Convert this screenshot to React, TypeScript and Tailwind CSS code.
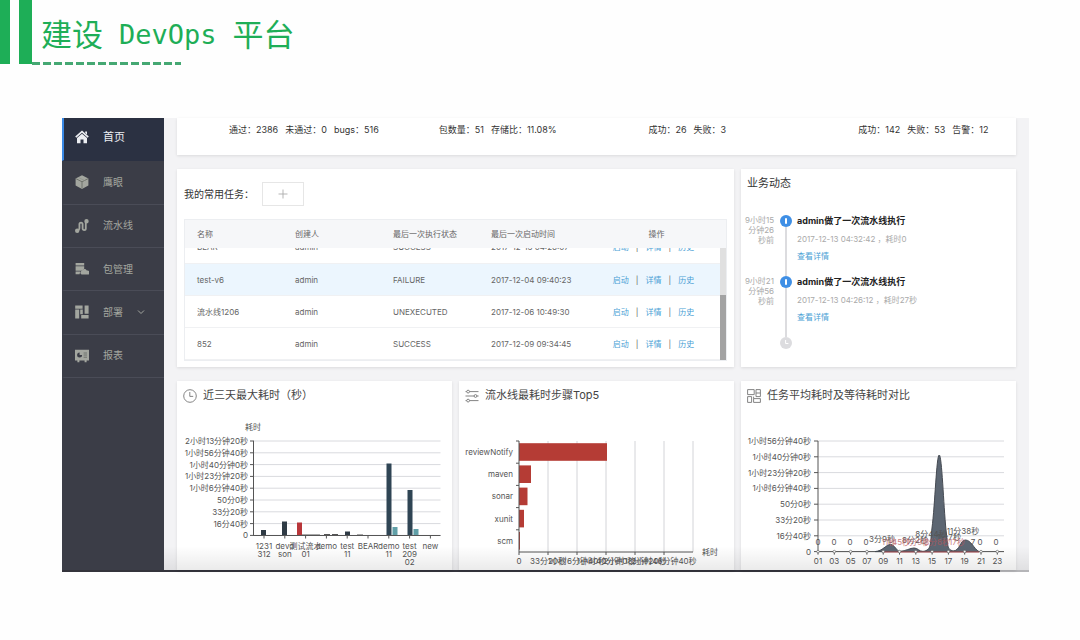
import { type ReactNode } from "react";
import { Plus } from "lucide-react";

const navItems = [
  { label: "首页", icon: <HomeIcon />, active: true },
  { label: "鹰眼", icon: <CubeIcon /> },
  { label: "流水线", icon: <PipelineIcon /> },
  { label: "包管理", icon: <PackageIcon /> },
  { label: "部署", icon: <DeployIcon />, expandable: true },
  { label: "报表", icon: <ReportIcon /> },
];

const stats = [
  ["通过：2386", "未通过：0", "bugs：516"],
  ["包数量：51", "存储比：11.08%"],
  ["成功：26", "失败：3"],
  ["成功：142", "失败：53", "告警：12"],
];

const tasks = [
  { name: "BEAR", owner: "admin", status: "SUCCESS", time: "2017-12-13 04:26:07" },
  { name: "test-v6", owner: "admin", status: "FAILURE", time: "2017-12-04 09:40:23", hover: true },
  { name: "流水线1206", owner: "admin", status: "UNEXECUTED", time: "2017-12-06 10:49:30" },
  { name: "852", owner: "admin", status: "SUCCESS", time: "2017-12-09 09:34:45" },
];

const events = [
  { ago: "9小时15分钟26秒前", detail: "2017-12-13 04:32:42 ，耗时0" },
  { ago: "9小时21分钟56秒前", detail: "2017-12-13 04:26:12 ，耗时27秒" },
];

function HomeIcon() {
  return (
    <svg viewBox="0 0 14 14" className="size-3.5" fill="currentColor">
      <path d="M7 .6 13.8 6.6l-1.1 1.2L7 2.8 1.3 7.8.2 6.6z" />
      <path d="M10.2 1.4H12v3.2l-1.8-1.5z" />
      <path d="M7 3.7 12 8v5.2H8.5V9.6h-3v3.6H2V8z" />
    </svg>
  );
}

function CubeIcon() {
  return (
    <svg viewBox="0 0 14 14" className="size-3.5">
      <path d="M7 .2 13.4 3.4v7.2L7 13.9.6 10.6V3.4z" fill="#a3a69f" />
      <path d="M1 3.7 7 6.8l6-3.1M7 6.8v6.6" fill="none" stroke="#6a6d66" strokeWidth=".9" />
      <path d="m3.6 2.6 6.6 3.2" stroke="#8a8d86" strokeWidth=".6" />
    </svg>
  );
}

function PipelineIcon() {
  return (
    <svg viewBox="0 0 14 14" className="size-3.5" fill="none" stroke="currentColor" strokeWidth="1.8">
      <path d="M2.4 11.4c2.6 0 2-3 2-6.200a1.600 1.600 0 0 1 3.200 0v4.400a1.600 1.600 0 0 0 3.200 0V2.6" />
      <circle cx="2.2" cy="11.7" r="1.3" fill="currentColor" />
      <circle cx="11.5" cy="2.3" r="1.3" fill="currentColor" />
    </svg>
  );
}

function PackageIcon() {
  return (
    <svg viewBox="0 0 14 14" className="size-3.5" fill="currentColor">
      <path d="M.6 1h8.6v2.600H.6zM.6 4.300h8.600v2.500L7 8.700H.6zM.6 9.500h4.600l-.6 2.800h-4z" />
      <path d="M6.600 12.600a2.100 2.100 0 0 1 .2-3.900 2.800 2.800 0 0 1 5-.1 2.100 2.100 0 0 1 1.300 4z" />
    </svg>
  );
}

function DeployIcon() {
  return (
    <svg viewBox="0 0 14 14" className="size-3.5" fill="currentColor">
      <path d="M.2.4h7.400v3.400H.2zM.2 4.600h4v9h-4zM9.600.4h4v8.400h-4zM5.200 4.600h2.600v4.600H5.200zM6.200 10h7.400v3.600H6.200z" />
    </svg>
  );
}

function ReportIcon() {
  return (
    <svg viewBox="0 0 14 14" className="size-3.5">
      <path d="M0 .8h14v10.600H0zM2.400 11.400h2V13.200h-2zM9.600 11.400h2V13.200h-2z" fill="#a3a69f" />
      <path d="M4.600 3.400a2.500 2.500 0 1 0 2.500 2.500H4.600z" fill="#3b3d47" />
      <path d="M8.600 4H12M8.600 6H12M8.600 8.200H12" stroke="#6a6d69" strokeWidth=".9" />
    </svg>
  );
}

function ClockIcon() {
  return (
    <svg viewBox="0 0 14 14" className="size-3.5" fill="none" stroke="currentColor" strokeWidth=".9">
      <circle cx="7" cy="7" r="6.3" />
      <path d="M6.8 3v4.400h3.400" />
    </svg>
  );
}

function StepsIcon() {
  return (
    <svg viewBox="0 0 14 14" className="size-3.5" fill="none" stroke="currentColor" strokeWidth=".9">
      <path d="M.5 2.600h1.200M4.500 2.600h9M.5 7h8.600M11.900 7h1.700M.5 11.600h1.200M4.500 11.600h9" />
      <circle cx="3.1" cy="2.6" r="1.4" />
      <circle cx="10.5" cy="7" r="1.4" />
      <circle cx="3.1" cy="11.6" r="1.4" />
    </svg>
  );
}

function CompareIcon() {
  return (
    <svg viewBox="0 0 14 14" className="size-3.5" fill="none" stroke="currentColor" strokeWidth=".9">
      <path d="M.6.6h6.600v5H.6zM9 .6h4.400v7H9zM.6 7.600h4v5.800h-4zM6.600 9.600h6.800v3.800H6.600zM6.600 7.600v2M9 4h4.400" />
    </svg>
  );
}

function Card({ className = "", children }: { className?: string; children: ReactNode }) {
  return <section className={`bg-white shadow-[0_1px_3px_#0000001a] ${className}`}>{children}</section>;
}

function ChartCard({ icon, title, children }: { icon: ReactNode; title: string; children: ReactNode }) {
  return (
    <Card>
      <h2 className="flex h-[29px] items-center gap-1.5 pl-1.5 text-[11px] text-[#444]">
        <span className="text-[#777]">{icon}</span>
        {title}
      </h2>
      {children}
    </Card>
  );
}

function Sidebar() {
  return (
    <nav className="w-[102px] shrink-0 bg-[#3b3d47]">
      <div className="grid h-[260px] grid-rows-6">
        {navItems.map((item) => (
          <a
            key={item.label}
            href="#"
            className={`flex items-center border-b border-l-2 pl-[11px] ${
              item.active
                ? "border-b-[#2b3142] border-l-[#3b8ae6] bg-[#2b3142] pb-1 text-[11px] text-[#eceef2]"
                : "border-b-[#4a4c57] border-l-transparent text-[10px] text-[#a3a69f]"
            }`}
          >
            {item.icon}
            <span className="ml-3.5">{item.label}</span>
            {item.expandable && (
              <svg viewBox="0 0 8 8" className="ml-3.5 size-2" fill="none" stroke="currentColor" strokeWidth="1">
                <path d="m1 2.5 3 3 3-3" />
              </svg>
            )}
          </a>
        ))}
      </div>
    </nav>
  );
}

function Columns() {
  return (
    <colgroup>
      <col className="w-[98px]" />
      <col className="w-[98px]" />
      <col className="w-[98px]" />
      <col className="w-[108px]" />
      <col />
    </colgroup>
  );
}

function TaskCard() {
  return (
    <Card className="col-span-2 px-[7px] pt-[13px]">
      <div className="flex items-center gap-2 text-[10px] text-[#333]">
        <h2>我的常用任务：</h2>
        <button
          type="button"
          aria-label="添加任务"
          className="flex h-6 w-[42px] items-center justify-center border border-[#e6e6e6] text-[#aaa]"
        >
          <Plus size={14} strokeWidth={1.5} />
        </button>
      </div>

      <div className="mt-[13px] border border-[#eceef1] text-[8px] text-[#666]">
        <table className="w-full table-fixed text-left">
          <Columns />
          <thead className="bg-[#f6f7f9]">
            <tr className="h-7">
              <th className="pl-3 font-normal">名称</th>
              <th className="pl-3 font-normal">创建人</th>
              <th className="pl-3 font-normal">最后一次执行状态</th>
              <th className="pl-3 font-normal">最后一次启动时间</th>
              <th className="text-center font-normal">操作</th>
            </tr>
          </thead>
        </table>
        {/* scrolled to the end, so the first row is half hidden */}
        <div className="flex h-28">
          <div className="flex min-w-0 flex-1 flex-col justify-end overflow-hidden">
            <table className="w-full table-fixed">
              <Columns />
              <tbody>
                {tasks.map((task) => (
                  <tr
                    key={task.name}
                    className={`h-8 border-b border-[#f0f1f3] ${task.hover ? "bg-[#ecf6fe]" : ""}`}
                  >
                    <td className="pl-3">{task.name}</td>
                    <td className="pl-3">{task.owner}</td>
                    <td className="pl-3">{task.status}</td>
                    <td className="pl-3">{task.time}</td>
                    <td>
                      <div className="flex items-center justify-center gap-[7px]">
                        <a href="#" className="text-[#4b9fd5]">启动</a>
                        <span>|</span>
                        <a href="#" className="text-[#4b9fd5]">详情</a>
                        <span>|</span>
                        <a href="#" className="text-[#4b9fd5]">历史</a>
                      </div>
                    </td>
                  </tr>
                ))}
              </tbody>
            </table>
          </div>
          <div className="flex w-1.5 flex-col justify-end bg-[#e0e0e0]">
            <div className="h-[65px] bg-[#a3a3a3]" />
          </div>
        </div>
      </div>
    </Card>
  );
}

function ActivityCard() {
  return (
    <Card className="h-[198px]">
      <h2 className="flex h-7 items-center pl-1.5 text-[11px] text-[#333]">业务动态</h2>
      <ol className="pt-[18px]">
        {events.map((event) => (
          <li key={event.ago} className="flex h-[61px]">
            <p className="w-[33px] text-right text-[8px] leading-[10px] text-[#aaa]">{event.ago}</p>
            <div className="ml-1.5 flex w-3 flex-col items-center">
              <span className="flex size-3 shrink-0 items-center justify-center rounded-full bg-[#3f8fe5]">
                <span className="h-1.5 w-0.5 rounded-full bg-white" />
              </span>
              <span className="w-0.5 flex-1 bg-[#dcdcdf]" />
            </div>
            <div className="ml-[5px]">
              <h3 className="text-[9px] leading-3 font-bold text-[#222]">admin做了一次流水线执行</h3>
              <p className="mt-1.5 text-[8px] leading-3 text-[#aaa]">{event.detail}</p>
              <a href="#" className="mt-[5px] block text-[8px] leading-3 text-[#4b9fd5]">
                查看详情
              </a>
            </div>
          </li>
        ))}
        <li className="ml-[39px]">
          <svg viewBox="0 0 12 12" className="size-3">
            <circle cx="6" cy="6" r="6" fill="#dcdcdf" />
            <path d="M5.600 3v3.500h2.800" fill="none" stroke="#fff" strokeWidth="1" />
          </svg>
        </li>
      </ol>
    </Card>
  );
}

const durationTicks = [
  "2小时13分钟20秒",
  "1小时56分钟40秒",
  "1小时40分钟0秒",
  "1小时23分钟20秒",
  "1小时6分钟40秒",
  "50分0秒",
  "33分20秒",
  "16分40秒",
  "0",
];

const maxBars = [
  { x: 84, h: 5.5, fill: "#2f3b45" },
  { x: 105, h: 14, fill: "#2f3b45" },
  { x: 120, h: 13, fill: "#b8363a" },
  { x: 168, h: 4, fill: "#2f3b45" },
  { x: 209.5, h: 72, fill: "#2f4554" },
  { x: 215.5, h: 8.5, fill: "#61a0a8" },
  { x: 230.5, h: 45.5, fill: "#2f4554" },
  { x: 236.5, h: 6.5, fill: "#61a0a8" },
];

const maxLabels = [
  ["1231", "312"],
  ["devd", "son"],
  ["测试流水", "01"],
  ["demo"],
  ["test", "11"],
  ["BEAR"],
  ["demo", "11"],
  ["test", "209", "02"],
  ["new"],
];

function MaxDurationChart() {
  return (
    <svg viewBox="0 0 275 160" className="block w-full text-[8px]" fill="#555">
      <text x="76" y="17" textAnchor="middle" dominantBaseline="central">耗时</text>
      {durationTicks.map((tick, i) => (
        <g key={tick}>
          <path d={`M76.5 ${31 + i * 11.8}H263.5`} stroke="#d9dade" />
          <path d={`M73 ${31 + i * 11.8}h4`} stroke="#555" />
          <text x="71" y={31 + i * 11.8} textAnchor="end" dominantBaseline="central">{tick}</text>
        </g>
      ))}
      {maxBars.map((bar) => (
        <rect key={bar.x} x={bar.x} y={125.5 - bar.h} width="5" height={bar.h} fill={bar.fill} />
      ))}
      <path d="M76.5 31v94.5H263.5M125 125h18M147 124.5h6m2 0h6M180 125h6" fill="none" stroke="#555" />
      {maxLabels.map((lines, i) => (
        <g key={i} textAnchor="middle">
          <path d={`M${87 + i * 20.8} 125.5v3`} stroke="#555" />
          {lines.map((line, row) => (
            <text key={line} x={87 + i * 20.8} y={135.5 + row * 8} dominantBaseline="central">{line}</text>
          ))}
        </g>
      ))}
    </svg>
  );
}

const steps = [
  { name: "reviewNotify", w: 88 },
  { name: "maven", w: 12 },
  { name: "sonar", w: 8.5 },
  { name: "xunit", w: 5 },
  { name: "scm", w: 1 },
];

const stepTicks = ["0", "33分20秒", "1小时6分钟40秒", "1小时40分钟0秒", "2小时13分钟20秒", "2小时46分钟40秒"];

function StepsChart() {
  return (
    <svg viewBox="0 0 275 160" className="block w-full text-[8px]" fill="#555">
      {[1, 2, 3, 4, 5, 6].map((i) => (
        <path key={i} d={`M${60 + i * 29} 31v111`} stroke="#d3d4d8" />
      ))}
      {steps.map((step, i) => (
        <g key={step.name}>
          <rect x="60" y={33.2 + i * 22.2} width={step.w} height="17.6" fill="#b53c35" />
          <path d={`M57 ${31 + i * 22.2}h3`} stroke="#555" />
          <text x="54" y={42 + i * 22.2} textAnchor="end" dominantBaseline="central">{step.name}</text>
        </g>
      ))}
      <path d="M60 31v111H234" fill="none" stroke="#555" />
      {stepTicks.map((tick, i) => (
        <g key={tick}>
          <path d={`M${60 + i * 29} 142v3`} stroke="#555" />
          <text x={60 + i * 29} y="151" textAnchor="middle" dominantBaseline="central">{tick}</text>
        </g>
      ))}
      <text x="243" y="142" dominantBaseline="central">耗时</text>
    </svg>
  );
}

const hours = ["01", "03", "05", "07", "09", "11", "13", "15", "17", "19", "21", "23"];

const averageLabels = [
  { x: 141, y: 129, text: "3分9秒" },
  { x: 174, y: 130, text: "8分2秒" },
  { x: 190, y: 124, text: "8分44秒" },
  { x: 222, y: 121, text: "11分38秒" },
  { x: 208, y: 127, text: "1分7秒" },
  { x: 232, y: 132, text: "7" },
];

const waitLabels = [
  { x: 148, text: "11秒" },
  { x: 160, text: "45秒" },
  { x: 177, text: "1分9秒" },
  { x: 196, text: "2分8秒" },
  { x: 216, text: "17秒" },
];

function CompareChart() {
  return (
    <svg viewBox="0 0 275 160" className="block w-full text-[8px]" fill="#555">
      {durationTicks.slice(1).map((tick, i) => (
        <g key={tick}>
          <path d={`M77 ${31 + i * 15.8}H263`} stroke="#d9dade" />
          <path d={`M73 ${31 + i * 15.8}h4`} stroke="#555" />
          <text x="70" y={31 + i * 15.8} textAnchor="end" dominantBaseline="central">{tick}</text>
        </g>
      ))}
      <path d="M77 31v110.6H263" fill="none" stroke="#555" />
      <path
        d="M134 141.6C142 141 145 134.5 149.5 134.5S155 141 159 141.4C165 141 169 138 173 138S178 141.5 182 141.4C191 140 189 134 191 118C194 95 195.5 45 198.2 45S202.500 95 205 120C207 137 206 139 212 141C219 141 219 130 224.5 130C230 130 233 139 238 141.6Z"
        fill="#5c6672"
        stroke="#454a52"
      />
      <path d="M142 142H238" stroke="#b8555a" />
      <g textAnchor="middle">
        {[77, 93, 109, 125, 239, 255].map((x) => (
          <text key={x} x={x} y="132" dominantBaseline="central">0</text>
        ))}
        {averageLabels.map((label) => (
          <text key={label.text} x={label.x} y={label.y} dominantBaseline="central">{label.text}</text>
        ))}
        <g fill="#b8555a" opacity=".75">
          {waitLabels.map((label) => (
            <text key={label.text} x={label.x} y="132" dominantBaseline="central">{label.text}</text>
          ))}
        </g>
        {hours.map((hour, i) => (
          <g key={hour}>
            <path d={`M${77 + i * 16.3} 141.6v3`} stroke="#555" />
            <circle cx={77 + i * 16.3} cy="141.6" r="1.3" fill="#fff" stroke="#555" strokeWidth=".6" />
            <text x={77 + i * 16.3} y="151" dominantBaseline="central">{hour}</text>
          </g>
        ))}
      </g>
    </svg>
  );
}

export default function App() {
  return (
    <div className="min-h-screen bg-[#fefefe] font-[family-name:Inter,'Noto_Sans_CJK_SC',sans-serif]">
      <header className="flex h-16 text-[#1eae57]">
        <div className="w-2.5 bg-[#1eae57]" />
        <div className="ml-[9px] w-[13px] bg-[#1eae57]" />
        <div className="flex flex-col">
          <h1 className="flex h-[62px] shrink-0 items-center gap-4 pt-2 pl-[9px] font-[family-name:'DejaVu_Sans_Mono','Noto_Sans_CJK_SC',monospace] text-[31px] leading-10 whitespace-nowrap">
            <span>建设</span>
            <span className="text-[27px]">DevOps</span>
            <span>平台</span>
          </h1>
          <div className="h-[3px] w-[149px] shrink-0 bg-[repeating-linear-gradient(90deg,#45a873_0_8px,transparent_8px_11px)]" />
        </div>
      </header>

      <div className="mt-[54px] mr-[51px] ml-[62px]">
        <div className="relative flex bg-[#f3f3f5]">
          <Sidebar />
          <main className="min-w-0 flex-1 px-[13px]">
            <Card className="grid h-[37px] grid-cols-4 text-[9px] text-[#333]">
              {stats.map((group, i) => (
                <div key={i} className="flex gap-[7px] pt-[5px] pl-[52px] whitespace-nowrap">
                  {group.map((stat) => (
                    <span key={stat}>{stat}</span>
                  ))}
                </div>
              ))}
            </Card>

            <div className="mt-3.5 grid grid-cols-3 gap-x-[7px] gap-y-3.5">
              <TaskCard />
              <ActivityCard />
              <ChartCard icon={<ClockIcon />} title="近三天最大耗时（秒）">
                <MaxDurationChart />
              </ChartCard>
              <ChartCard icon={<StepsIcon />} title="流水线最耗时步骤Top5">
                <StepsChart />
              </ChartCard>
              <ChartCard icon={<CompareIcon />} title="任务平均耗时及等待耗时对比">
                <CompareChart />
              </ChartCard>
            </div>
          </main>
          <div className="pointer-events-none absolute right-0 bottom-0 left-[102px] h-6 bg-linear-to-b from-transparent to-black/8" />
        </div>
        <div className="h-0.5 bg-linear-to-r from-[#34343c] from-97% to-[#b5b5b8] to-97%" />
      </div>
    </div>
  );
}
